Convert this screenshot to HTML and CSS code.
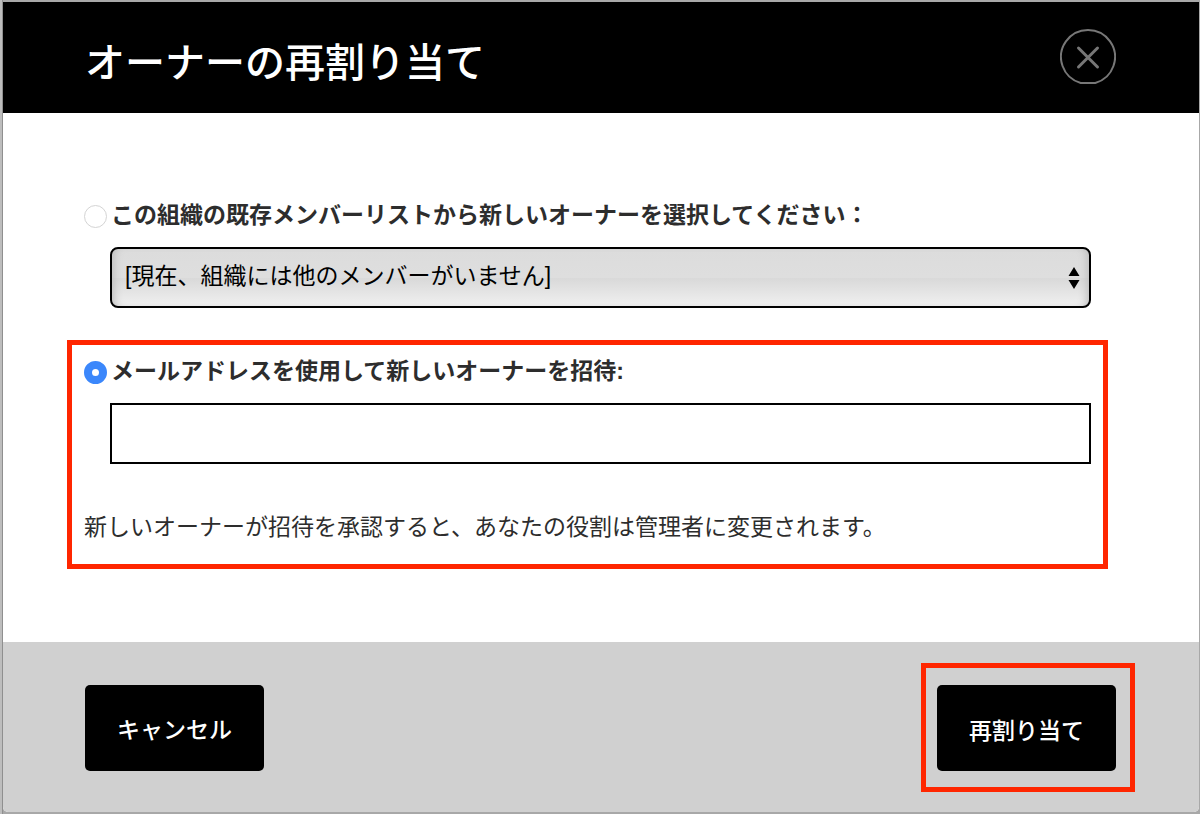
FILE: index.html
```
<!DOCTYPE html>
<html lang="ja">
<head>
  <meta charset="utf-8">
  <meta name="viewport" content="width=device-width, initial-scale=1">
  <title>オーナーの再割り当て</title>
  <link rel="stylesheet" href="styles.css">
</head>
<body>
  <form class="modal">
    <header class="modal-header">
      <h1>オーナーの再割り当て</h1>
      <button type="button" class="close" aria-label="閉じる">
        <svg width="56" height="57" viewBox="0 0 56 57" fill="none" stroke="#777">
          <path d="M20.7 55A27 27 0 1 1 35.3 55Z" stroke-width="2"/>
          <path d="M18.5 20L37.5 39M37.5 20L18.5 39" stroke-width="3" stroke-linecap="round"/>
        </svg>
      </button>
    </header>

    <main class="modal-body">
      <div class="option">
        <div class="option-label">
          <input type="radio" name="owner" id="existing">
          <label for="existing">この組織の既存メンバーリストから新しいオーナーを選択してください：</label>
        </div>
        <div class="select-wrap">
          <select class="field" aria-label="既存メンバー">
            <option>[現在、組織には他のメンバーがいません]</option>
          </select>
          <svg class="arrows" width="12" height="22" viewBox="0 0 12 22">
            <path d="M6 0L11.5 9H0.5ZM6 22L0.5 13H11.5Z"/>
          </svg>
        </div>
      </div>

      <div class="option highlight">
        <div class="option-label">
          <input type="radio" name="owner" id="invite" checked>
          <label for="invite">メールアドレスを使用して新しいオーナーを招待:</label>
        </div>
        <input type="email" class="field" aria-label="メールアドレス">
        <p class="note">新しいオーナーが招待を承認すると、あなたの役割は管理者に変更されます。</p>
      </div>
    </main>

    <footer class="modal-footer">
      <button type="button" class="btn">キャンセル</button>
      <div class="highlight highlight-btn">
        <button type="submit" class="btn">再割り当て</button>
      </div>
    </footer>
  </form>
</body>
</html>
```

FILE: styles.css
```
* {
  box-sizing: border-box;
}

body {
  margin: 0;
  padding: 2px 1px 2px 3px;
  background: linear-gradient(to right, #bdbdbd 2px, #8f8f8f 2px, #8f8f8f 3px, #a8a8a8 3px);
  color: #2d2d2d;
  font-family: "Liberation Sans", "Noto Sans CJK JP", sans-serif;
  font-size: 23px;
  line-height: 32px;
}

button, input, select {
  margin: 0;
  font: inherit;
}

.modal {
  background-color: #fff;
  border-radius: 0 0 5px 5px;
  overflow: hidden;
}

.modal-header {
  display: flex;
  justify-content: space-between;
  align-items: flex-start;
  padding: 26px 83px 27px 82px;
  background-color: #000;
}

.modal-header h1 {
  margin: 0;
  padding-top: 12px;
  color: #fff;
  font-size: 40px;
  font-weight: 500;
  line-height: 46px;
}

.close {
  display: flex;
  padding: 0;
  background: none;
  border: none;
  cursor: pointer;
}

.modal-body {
  display: flex;
  flex-direction: column;
  gap: 32px;
  padding: 86px 91px 73px 64px;
}

.option {
  padding: 0 17px;
}

.option-label {
  display: flex;
  align-items: center;
  gap: 4px;
  margin-bottom: 16px;
  font-weight: bold;
}

.option-label input {
  flex: none;
  appearance: none;
  width: 23px;
  height: 23px;
  margin-top: 3px;
  background-color: #fff;
  border: 1px solid #d4d4d4;
  border-radius: 50%;
}

.option-label input:checked {
  border: 8px solid #3b87fb;
}

.select-wrap {
  position: relative;
  display: flex;
}

.field {
  display: block;
  flex: 1;
  width: calc(100% - 26px);
  height: 61px;
  margin-left: 26px;
  padding: 0 13px 3px;
  background-color: #fff;
  border: 2px solid #000;
  color: #000;
}

select.field {
  appearance: none;
  background: linear-gradient(#dcdcdc, #dedede 50%, #d9d9d9 52%, #f0f0f0);
  border-radius: 8px;
  box-shadow: inset 8px 0 8px -6px #bbb, inset -8px 0 8px -6px #bbb;
}

.arrows {
  position: absolute;
  top: 20px;
  right: 11px;
  pointer-events: none;
}

.highlight {
  border: 5px solid #ff2600;
}

.option.highlight {
  padding: 10px 12px 21px;
}

.note {
  margin: 47px 0 0;
}

.modal-footer {
  display: flex;
  justify-content: space-between;
  align-items: center;
  padding: 21px 64px 20px 82px;
  background-color: #d0d0d0;
}

.highlight-btn {
  padding: 17px 14px 16px 11px;
}

.btn {
  display: block;
  min-width: 179px;
  height: 86px;
  padding: 5px 32px 0;
  background-color: #000;
  border: none;
  border-radius: 5px;
  color: #fff;
  font-weight: 500;
  cursor: pointer;
}
```
